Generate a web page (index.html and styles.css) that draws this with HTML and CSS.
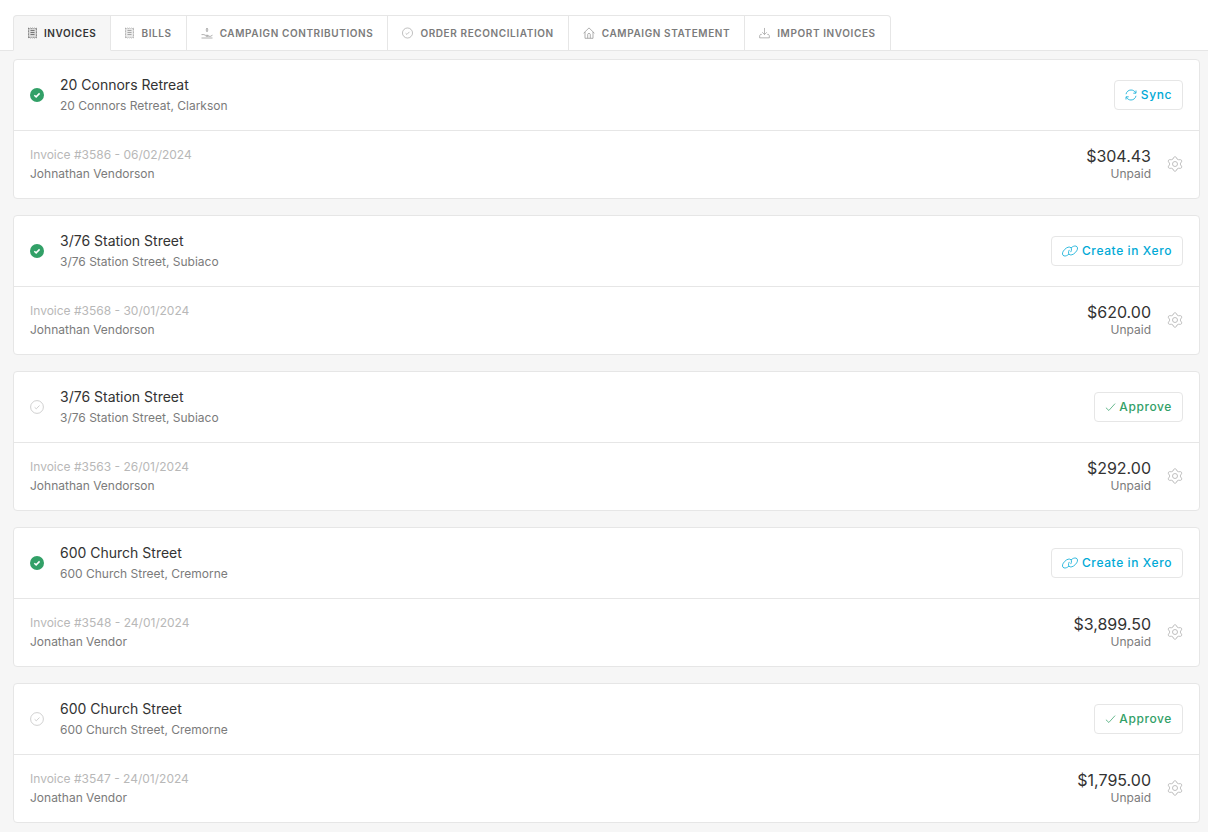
FILE: index.html
```html
<!DOCTYPE html>
<html lang="en">
<head>
    <meta charset="UTF-8">
    <meta name="viewport" content="width=device-width, initial-scale=1.0">
    <title>Invoices</title>
    <link rel="stylesheet" href="styles.css">
</head>
<body>
    <svg class="sprite" aria-hidden="true">
        <symbol id="icon-receipt" viewBox="0 0 9 12">
            <path fill="currentColor" fill-opacity=".15" stroke-dasharray="1 .5" d="M.5 1l1 .6 1-.6 1 .6 1-.6 1 .6 1-.6 1 .6 1-.6v10l-1-.6-1 .6-1-.6-1 .6-1-.6-1 .6-1-.6-1 .6z"/>
            <path d="M2.500 3.500h4M2.500 5.500h4M2.500 7.500h4"/>
        </symbol>
        <symbol id="icon-hand" viewBox="0 0 12 12">
            <path d="M6 1C5 2.200 5 3.600 6 4.800 7 3.600 7 2.200 6 1z"/>
            <path d="M.5 7.600h2.300l1.700.7h2.700v1H4.800M7.500 9.300h2L11.500 8.200M.5 11h11"/>
        </symbol>
        <symbol id="icon-circle-check" viewBox="0 0 14 14">
            <circle cx="7" cy="7" r="6.400"/>
            <path d="M4.600 7.300l1.700 1.500 3.200-3.300"/>
        </symbol>
        <symbol id="icon-home" viewBox="0 0 12 12">
            <path d="M.6 6.200L6 .9l5.400 5.300M2 5v6.300h8V5M4.700 11.200V7.500c0-1.500 2.600-1.500 2.600 0v3.700"/>
        </symbol>
        <symbol id="icon-import" viewBox="0 0 12 12">
            <path d="M6 .5v7M3.500 5.200L6 7.700l2.500-2.500M3 7.500H1.700L.7 9v2.300h10.600V9l-1-1.500H9"/>
        </symbol>
        <symbol id="icon-sync" viewBox="0 0 12 12">
            <path d="M1 5.200C1.500 2.700 3.500 1 6 1c2 0 3.700 1 4.500 2.700M11 1.500v2.700H8.300M11 6.800C10.500 9.300 8.500 11 6 11c-2 0-3.700-1-4.500-2.700M1 10.500V7.800h2.700"/>
        </symbol>
        <symbol id="icon-link" viewBox="0 0 16 12">
            <path d="M7 9C5.300 10.700 3.400 11.300 2 10.900.2 10.300 0 8.300 1.300 6.200 2.900 3.600 5.800 1.700 7.700 2.100c2.100.4 2.300 2.700 1 5"/>
            <path d="M9 3c1.700-1.700 3.600-2.300 5-1.900 1.800.6 2 2.600.7 4.700-1.600 2.600-4.500 4.500-6.400 4.100-2.100-.4-2.300-2.700-1-5"/>
        </symbol>
        <symbol id="icon-check" viewBox="0 0 12 12">
            <path d="M1 6.800l3.200 3L11 2.300"/>
        </symbol>
        <symbol id="icon-gear" viewBox="0 0 16 16">
            <path d="M6.600 1.500Q8-.3 9.400 1.500L10 3l1.700.8 1.600-.2q1.900.3 1.300 2.200l-1.100 1.300v1.800l1.100 1.300q.6 1.900-1.300 2.200l-1.600-.2L10 13l-.6 1.500q-1.400 1.800-2.800 0L6 13l-1.700-.8-1.600.2q-1.900-.3-1.300-2.200l1.100-1.300V7.100L1.400 5.800q-.6-1.900 1.300-2.200l1.600.2L6 3z"/>
            <circle cx="8" cy="8" r="2.500"/>
        </symbol>
        <symbol id="icon-approved" viewBox="0 0 14 14">
            <circle class="disc" cx="7" cy="7" r="7"/>
            <path class="tick" d="M4.300 7.300l1.800 1.600 3.500-3.500"/>
        </symbol>
    </svg>

    <nav class="tabs">
        <a class="tab active" href="#invoices"><svg class="icon icon-narrow"><use href="#icon-receipt"/></svg>Invoices</a>
        <a class="tab" href="#bills"><svg class="icon icon-narrow"><use href="#icon-receipt"/></svg>Bills</a>
        <a class="tab" href="#contributions"><svg class="icon"><use href="#icon-hand"/></svg>Campaign Contributions</a>
        <a class="tab" href="#reconciliation"><svg class="icon icon-small"><use href="#icon-circle-check"/></svg>Order Reconciliation</a>
        <a class="tab" href="#statement"><svg class="icon"><use href="#icon-home"/></svg>Campaign Statement</a>
        <a class="tab" href="#import"><svg class="icon icon-small"><use href="#icon-import"/></svg>Import Invoices</a>
    </nav>

    <main class="invoices">
        <article class="card">
            <header class="card-header">
                <svg class="status"><use href="#icon-approved"/></svg>
                <div class="property">
                    <h2>20 Connors Retreat</h2>
                    <p>20 Connors Retreat, Clarkson</p>
                </div>
                <button class="btn"><svg class="icon"><use href="#icon-sync"/></svg>Sync</button>
            </header>
            <div class="card-body">
                <div class="details">
                    <p class="number">Invoice #3586 - 06/02/2024</p>
                    <p>Johnathan Vendorson</p>
                </div>
                <div class="total">
                    <p class="amount">$304.43</p>
                    <p>Unpaid</p>
                </div>
                <button class="settings" aria-label="Settings"><svg><use href="#icon-gear"/></svg></button>
            </div>
        </article>

        <article class="card">
            <header class="card-header">
                <svg class="status"><use href="#icon-approved"/></svg>
                <div class="property">
                    <h2>3/76 Station Street</h2>
                    <p>3/76 Station Street, Subiaco</p>
                </div>
                <button class="btn"><svg class="icon icon-wide"><use href="#icon-link"/></svg>Create in Xero</button>
            </header>
            <div class="card-body">
                <div class="details">
                    <p class="number">Invoice #3568 - 30/01/2024</p>
                    <p>Johnathan Vendorson</p>
                </div>
                <div class="total">
                    <p class="amount">$620.00</p>
                    <p>Unpaid</p>
                </div>
                <button class="settings" aria-label="Settings"><svg><use href="#icon-gear"/></svg></button>
            </div>
        </article>

        <article class="card">
            <header class="card-header">
                <svg class="status pending"><use href="#icon-circle-check"/></svg>
                <div class="property">
                    <h2>3/76 Station Street</h2>
                    <p>3/76 Station Street, Subiaco</p>
                </div>
                <button class="btn btn-approve"><svg class="icon icon-small"><use href="#icon-check"/></svg>Approve</button>
            </header>
            <div class="card-body">
                <div class="details">
                    <p class="number">Invoice #3563 - 26/01/2024</p>
                    <p>Johnathan Vendorson</p>
                </div>
                <div class="total">
                    <p class="amount">$292.00</p>
                    <p>Unpaid</p>
                </div>
                <button class="settings" aria-label="Settings"><svg><use href="#icon-gear"/></svg></button>
            </div>
        </article>

        <article class="card">
            <header class="card-header">
                <svg class="status"><use href="#icon-approved"/></svg>
                <div class="property">
                    <h2>600 Church Street</h2>
                    <p>600 Church Street, Cremorne</p>
                </div>
                <button class="btn"><svg class="icon icon-wide"><use href="#icon-link"/></svg>Create in Xero</button>
            </header>
            <div class="card-body">
                <div class="details">
                    <p class="number">Invoice #3548 - 24/01/2024</p>
                    <p>Jonathan Vendor</p>
                </div>
                <div class="total">
                    <p class="amount">$3,899.50</p>
                    <p>Unpaid</p>
                </div>
                <button class="settings" aria-label="Settings"><svg><use href="#icon-gear"/></svg></button>
            </div>
        </article>

        <article class="card">
            <header class="card-header">
                <svg class="status pending"><use href="#icon-circle-check"/></svg>
                <div class="property">
                    <h2>600 Church Street</h2>
                    <p>600 Church Street, Cremorne</p>
                </div>
                <button class="btn btn-approve"><svg class="icon icon-small"><use href="#icon-check"/></svg>Approve</button>
            </header>
            <div class="card-body">
                <div class="details">
                    <p class="number">Invoice #3547 - 24/01/2024</p>
                    <p>Jonathan Vendor</p>
                </div>
                <div class="total">
                    <p class="amount">$1,795.00</p>
                    <p>Unpaid</p>
                </div>
                <button class="settings" aria-label="Settings"><svg><use href="#icon-gear"/></svg></button>
            </div>
        </article>
    </main>
</body>
</html>
```
FILE: styles.css
```css
* {
    box-sizing: border-box;
}

body {
    margin: 0;
    background-color: #f6f6f6;
    color: #7b7b7b;
    font-family: Inter, "Liberation Sans", sans-serif;
    font-size: 12px;
    line-height: 19px;
}

h2,
p {
    margin: 0;
}

svg {
    display: block;
    flex: none;
    fill: none;
    stroke: currentColor;
    stroke-width: 0.8;
}

.sprite {
    position: absolute;
    width: 0;
    height: 0;
}

.icon {
    width: 12px;
    height: 12px;
}

.icon-narrow {
    width: 9px;
}

.icon-small {
    width: 11px;
}

.icon-wide {
    width: 16px;
}

/* Tabs */
.tabs {
    display: flex;
    padding: 15px 13px 0;
    background-color: #ffffff;
    box-shadow: inset 0 -1px #e6e6e6;
}

.tab {
    display: flex;
    align-items: center;
    gap: 7px;
    height: 36px;
    padding: 0 14px;
    border: 1px solid #e6e6e6;
    border-left: none;
    background-color: #ffffff;
    color: #7b7b7b;
    font-size: 10px;
    font-weight: 600;
    letter-spacing: 0.06em;
    text-decoration: none;
    text-transform: uppercase;
    white-space: nowrap;
}

.tab svg {
    stroke-width: 0.6;
}

.tab:first-child {
    border-left: 1px solid #e6e6e6;
    border-top-left-radius: 4px;
}

.tab:last-child {
    border-top-right-radius: 4px;
}

.tab.active {
    border-bottom-color: #f6f6f6;
    background-color: #f6f6f6;
    color: #333333;
}

/* Invoice cards */
.invoices {
    display: flex;
    flex-direction: column;
    gap: 16px;
    padding: 8px 8px 9px 13px;
}

.card {
    border: 1px solid #e6e6e6;
    border-radius: 4px;
    background-color: #ffffff;
}

.card-header {
    display: flex;
    align-items: center;
    height: 71px;
    padding: 0 16px;
    border-bottom: 1px solid #e6e6e6;
}

.status {
    width: 14px;
    height: 14px;
    margin-right: 16px;
}

.status.pending {
    color: #c4c4c4;
}

.disc {
    fill: #32a067;
    stroke: none;
}

.tick {
    stroke: #ffffff;
    stroke-width: 1.5;
}

.property {
    flex: 1;
}

.property h2 {
    margin-bottom: 1px;
    color: #333333;
    font-size: 14px;
    font-weight: 400;
    line-height: 20px;
}

.btn {
    display: flex;
    align-items: center;
    gap: 4px;
    height: 30px;
    padding: 0 10px 1px;
    border: 1px solid #e6e6e6;
    border-radius: 4px;
    background-color: #ffffff;
    color: #00a9d6;
    cursor: pointer;
    font-family: inherit;
    font-size: 12px;
    font-weight: 500;
    letter-spacing: 0.05em;
    line-height: 19px;
}

.btn-approve {
    gap: 3px;
    color: #32a067;
}

.card-body {
    display: flex;
    align-items: center;
    height: 67px;
    padding: 0 16px 2px;
}

.details {
    flex: 1;
}

.number {
    color: #b8b8b8;
}

.total {
    line-height: 16px;
    text-align: right;
}

.amount {
    color: #333333;
    font-size: 16px;
    line-height: 20px;
}

.settings {
    margin-left: 16px;
    padding: 0;
    border: none;
    background: none;
    color: #b0b0b0;
    cursor: pointer;
}

.settings svg {
    width: 16px;
    height: 16px;
}
```
